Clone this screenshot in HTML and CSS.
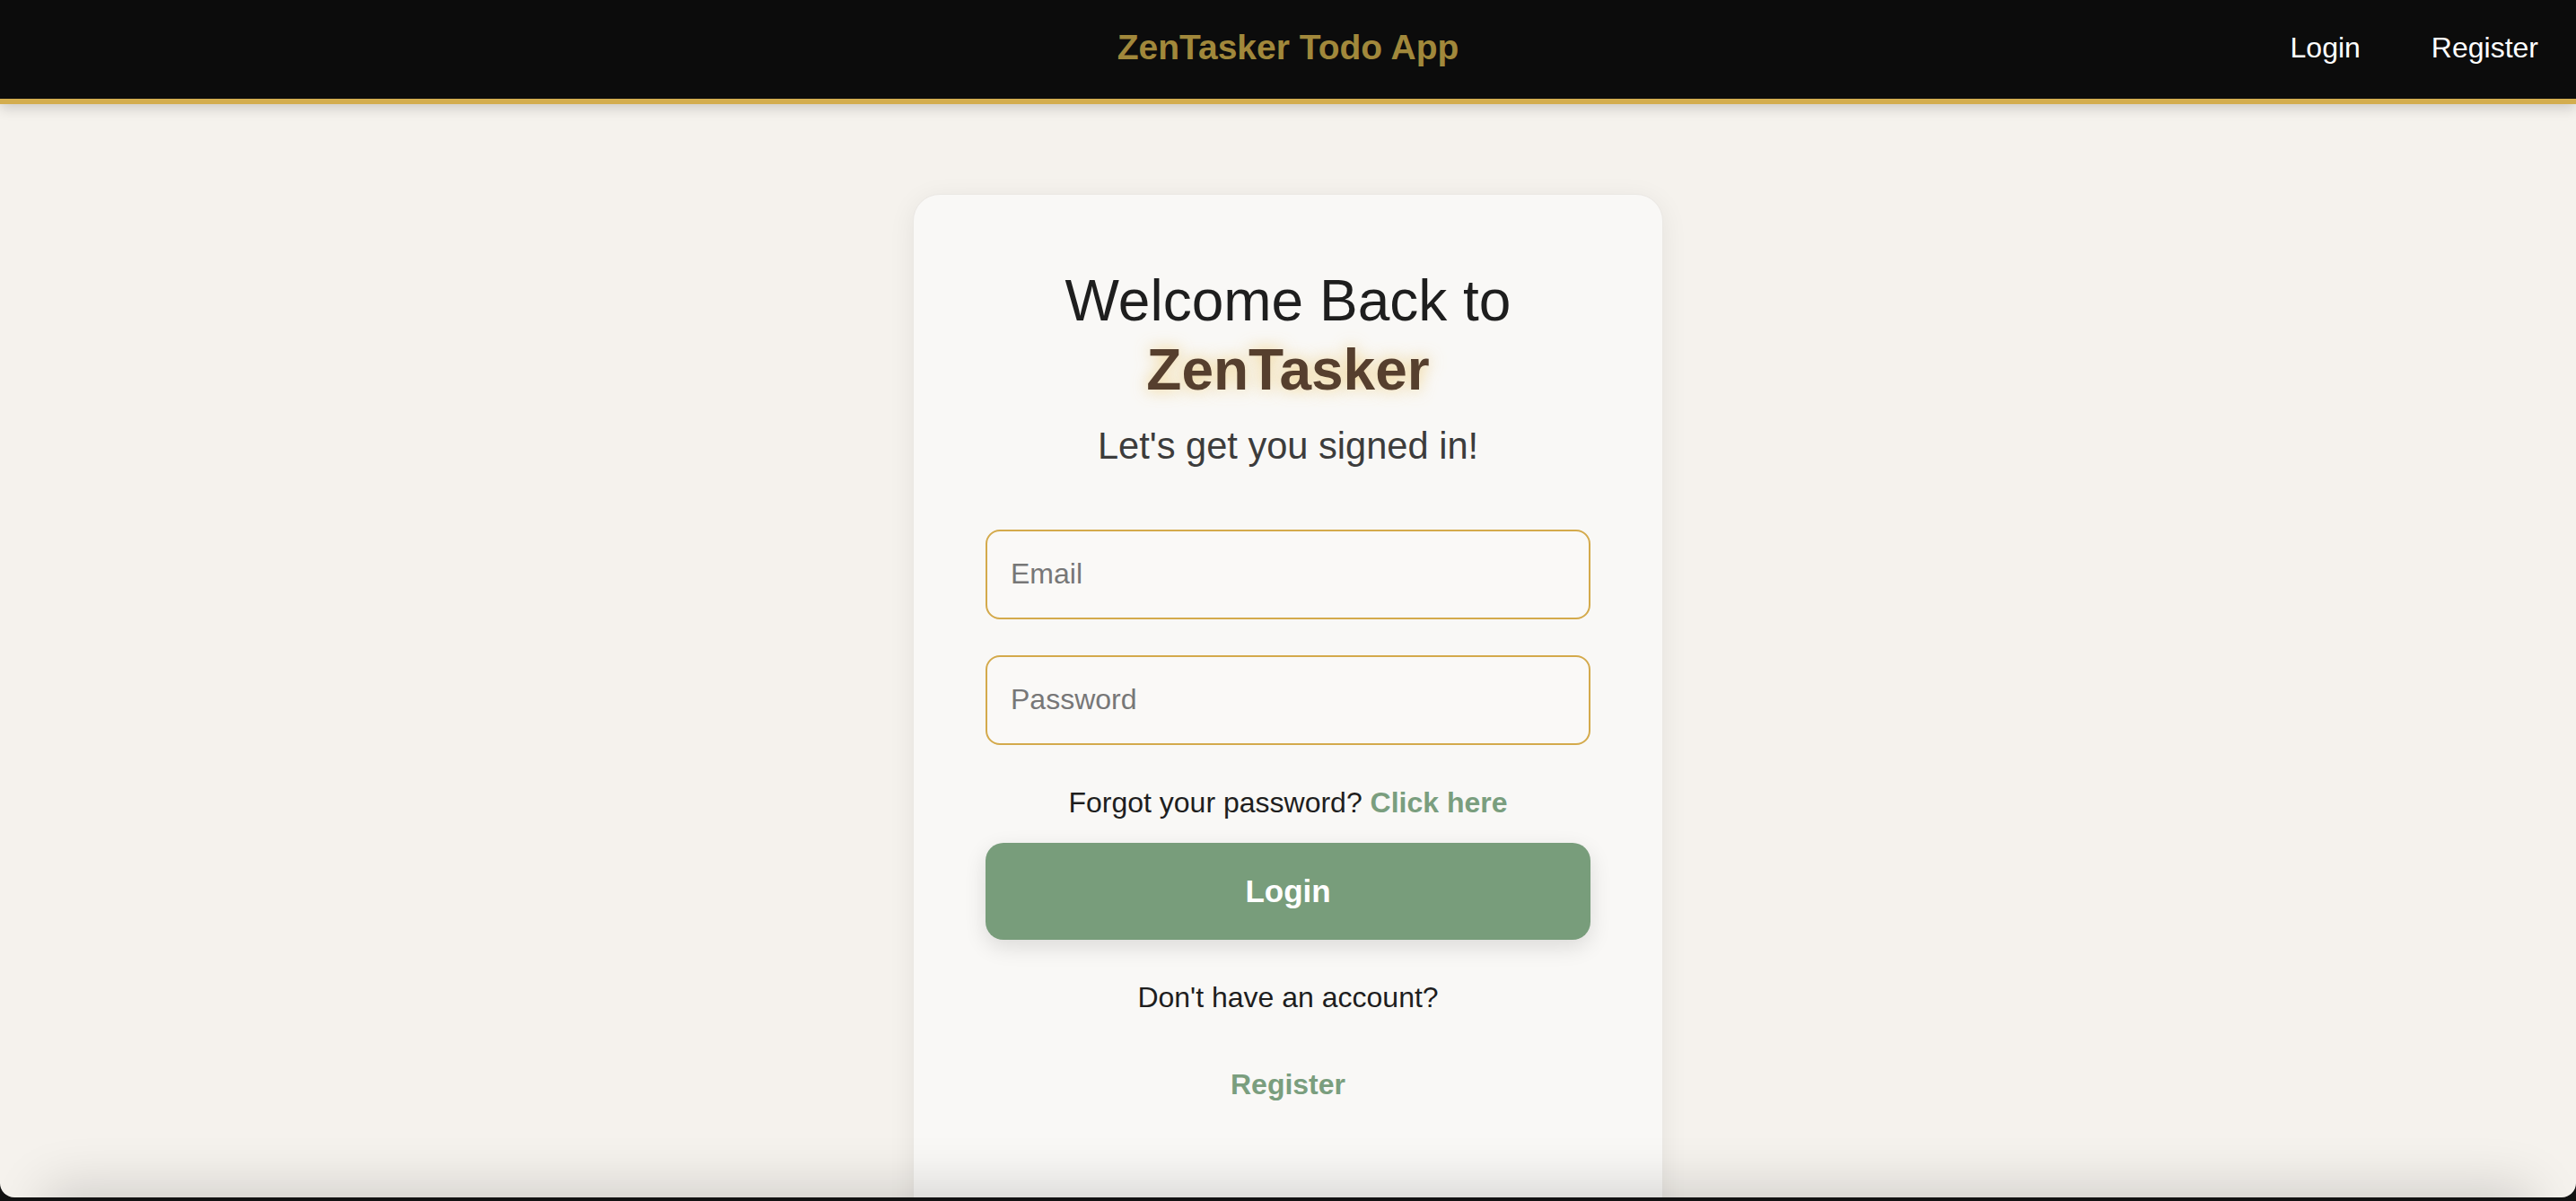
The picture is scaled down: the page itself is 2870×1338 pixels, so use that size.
FILE: index.html
```html
<!DOCTYPE html>
<html lang="en">
<head>
<meta charset="utf-8">
<title>ZenTasker Todo App</title>
<link rel="stylesheet" href="styles.css">
</head>
<body>
<div class="window">
  <header class="topbar">
    <div class="spacer"></div>
    <div class="brand">ZenTasker Todo App</div>
    <nav class="nav">
      <a href="#" class="nav-link">Login</a>
      <a href="#" class="nav-link">Register</a>
    </nav>
  </header>
  <main class="main">
    <section class="card">
      <h1 class="heading">Welcome Back to <span class="brand-name">ZenTasker</span></h1>
      <p class="subtitle">Let's get you signed in!</p>
      <form class="form">
        <input class="field" type="email" placeholder="Email">
        <input class="field" type="password" placeholder="Password">
        <p class="forgot">Forgot your password? <a href="#" class="link">Click here</a></p>
        <button type="button" class="btn">Login</button>
      </form>
      <p class="no-account">Don't have an account?</p>
      <p class="register"><a href="#" class="link">Register</a></p>
    </section>
  </main>
  <div class="bottom-shade"></div>
</div>
</body>
</html>
```
FILE: styles.css
```css
html, body {
  margin: 0;
  padding: 0;
  background: #121212;
}
body {
  font-family: "Liberation Sans", Arial, sans-serif;
  height: 1338px;
  overflow: hidden;
}
.window {
  position: relative;
  height: 1334px;
  overflow: hidden;
  border-radius: 0 0 16px 16px;
  background: #f5f2ed;
}
.topbar {
  height: 116px;
  box-sizing: border-box;
  padding: 0 42px 4px 42px;
  background: #0c0c0c;
  border-bottom: 6px solid #d3ad4f;
  box-shadow: 0 4px 14px rgba(0, 0, 0, 0.18);
  display: grid;
  grid-template-columns: 1fr auto 1fr;
  align-items: center;
  position: relative;
  z-index: 2;
}
.brand {
  color: #a1883b;
  font-weight: bold;
  font-size: 39px;
}
.nav {
  justify-self: end;
  display: flex;
  gap: 79px;
}
.nav-link {
  color: #ffffff;
  text-decoration: none;
  font-size: 32px;
}
.main {
  display: flex;
  justify-content: center;
  padding-top: 100px;
}
.card {
  width: 836px;
  box-sizing: border-box;
  padding: 80px 80px 200px;
  background: #f9f8f6;
  border: 1px solid #ebe8e4;
  border-radius: 30px;
  box-shadow: 0 6px 30px rgba(0, 0, 0, 0.07);
  text-align: center;
}
.heading {
  margin: 0;
  font-size: 64px;
  font-weight: normal;
  line-height: 1.2;
  color: #1e1e1e;
}
.brand-name {
  display: block;
  font-weight: bold;
  color: #563f2e;
  text-shadow: 0 0 18px rgba(236, 196, 100, 0.75);
}
.subtitle {
  margin: 22px 0 0;
  font-size: 41.6px;
  color: #3c3c3c;
}
.form {
  margin-top: 69px;
  display: flex;
  flex-direction: column;
}
.field {
  height: 100px;
  box-sizing: border-box;
  margin: 0 0 40px;
  padding: 0 26px;
  border: 2px solid #d4aa4c;
  border-radius: 16px;
  background: #faf9f7;
  font-family: "Liberation Sans", Arial, sans-serif;
  font-size: 32px;
  color: #222;
  outline: none;
}
.field:last-of-type {
  margin-bottom: 0;
}
.field::placeholder {
  color: #777;
}
.forgot {
  margin: 46px 0 0;
  font-size: 32px;
  color: #1e1e1e;
}
.link {
  color: #7a9e7e;
  font-weight: bold;
  text-decoration: none;
}
.btn {
  margin-top: 26px;
  height: 108px;
  border: none;
  border-radius: 20px;
  background: #789d7b;
  color: #fff;
  font-family: "Liberation Sans", Arial, sans-serif;
  font-size: 35px;
  font-weight: bold;
  box-shadow: 0 8px 24px rgba(0, 0, 0, 0.12);
}
.no-account {
  margin: 46px 0 0;
  font-size: 32px;
  color: #1e1e1e;
}
.register {
  margin: 60px 0 0;
  font-size: 32px;
}
.bottom-shade {
  position: absolute;
  left: 60px;
  right: 60px;
  bottom: -60px;
  height: 60px;
  box-shadow: 0 0 60px 10px rgba(0, 0, 0, 0.16);
  z-index: 3;
}
```
